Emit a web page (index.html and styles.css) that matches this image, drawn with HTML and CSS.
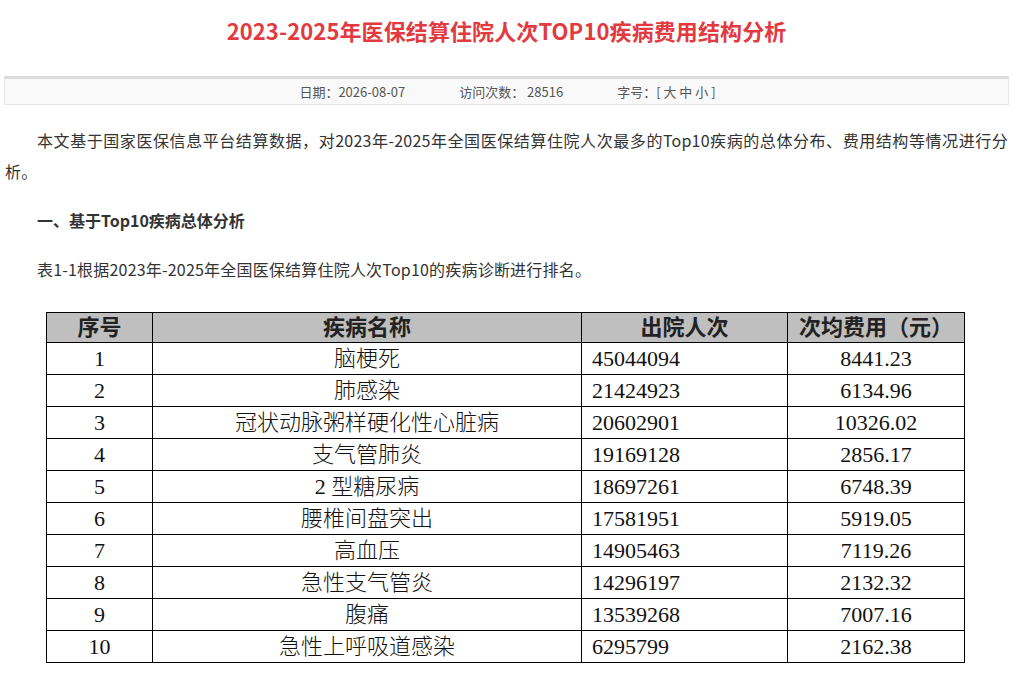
FILE: index.html
```html
<!DOCTYPE html>
<html lang="zh-CN">
<head>
<meta charset="utf-8">
<title>2023-2025年医保结算住院人次TOP10疾病费用结构分析</title>
<link rel="stylesheet" href="styles.css">
</head>
<body>
<div class="page">
  <h1 class="title">2023-2025年医保结算住院人次TOP10疾病费用结构分析</h1>
  <div class="infobar">
    <span class="info-item">日期：2026-08-07</span>
    <span class="info-item">访问次数： 28516</span>
    <span class="info-item">字号：[ 大 中 小 ]</span>
  </div>
  <div class="article">
    <p class="para">本文基于国家医保信息平台结算数据，对2023年-2025年全国医保结算住院人次最多的Top10疾病的总体分布、费用结构等情况进行分析。</p>
    <p class="para heading">一、基于Top10疾病总体分析</p>
    <p class="para">表1-1根据2023年-2025年全国医保结算住院人次Top10的疾病诊断进行排名。</p>
    <table class="data">
      <colgroup>
        <col class="c1"><col class="c2"><col class="c3"><col class="c4">
      </colgroup>
      <thead>
        <tr><th>序号</th><th>疾病名称</th><th>出院人次</th><th>次均费用（元）</th></tr>
      </thead>
      <tbody>
        <tr><td>1</td><td>脑梗死</td><td class="num">45044094</td><td>8441.23</td></tr>
        <tr><td>2</td><td>肺感染</td><td class="num">21424923</td><td>6134.96</td></tr>
        <tr><td>3</td><td>冠状动脉粥样硬化性心脏病</td><td class="num">20602901</td><td>10326.02</td></tr>
        <tr><td>4</td><td>支气管肺炎</td><td class="num">19169128</td><td>2856.17</td></tr>
        <tr><td>5</td><td>2 型糖尿病</td><td class="num">18697261</td><td>6748.39</td></tr>
        <tr><td>6</td><td>腰椎间盘突出</td><td class="num">17581951</td><td>5919.05</td></tr>
        <tr><td>7</td><td>高血压</td><td class="num">14905463</td><td>7119.26</td></tr>
        <tr><td>8</td><td>急性支气管炎</td><td class="num">14296197</td><td>2132.32</td></tr>
        <tr><td>9</td><td>腹痛</td><td class="num">13539268</td><td>7007.16</td></tr>
        <tr><td>10</td><td>急性上呼吸道感染</td><td class="num">6295799</td><td>2162.38</td></tr>
      </tbody>
    </table>
  </div>
</div>
</body>
</html>
```
FILE: styles.css
```css
html, body {
  margin: 0;
  padding: 0;
  background: #fff;
}
body {
  font-family: "Noto Sans CJK SC", "Noto Sans", sans-serif;
  color: #333;
}
.page {
  width: 1005px;
  margin: 0 0 0 4px;
}
.title {
  margin: 0;
  padding-top: 15px;
  line-height: 30px;
  font-size: 22px;
  font-weight: bold;
  color: #e23a3f;
  text-align: center;
  letter-spacing: 0.1px;
}
.infobar {
  margin-top: 31px;
  height: 25px;
  line-height: 25px;
  border: 1px solid #e6e6e6;
  border-top: 3px solid #dcdcdc;
  background: #f9f9f9;
  display: flex;
  justify-content: center;
  gap: 54px;
  font-size: 13px;
  color: #555;
  padding-left: 2px;
}
.article {
  padding: 0 1px;
}
.para {
  margin: 20px 0 0 0;
  font-size: 16px;
  line-height: 31px;
  text-indent: 2em;
  text-align: justify;
  letter-spacing: 0.2px;
  color: #333;
}
.para + .para {
  margin-top: 18px;
}
.heading {
  font-weight: bold;
  letter-spacing: 0;
}
.data {
  margin: 27px auto 0;
  border-collapse: collapse;
  table-layout: fixed;
  width: 918px;
  font-family: "Liberation Serif", "Noto Sans CJK SC", serif;
  font-size: 22px;
  color: #111;
  position: relative;
  left: -1px;
}
.c1 { width: 106px; }
.c2 { width: 429px; }
.c3 { width: 206px; }
.c4 { width: 177px; }
.data th, .data td {
  border: 1px solid #000;
  padding: 0;
  text-align: center;
  white-space: nowrap;
}
.data th {
  background: #bfbfbf;
  height: 29px;
  line-height: 29px;
  font-weight: bold;
  font-size: 22px;
  color: #222;
}
.data td {
  height: 31px;
  line-height: 31px;
  font-weight: 300;
}
.data td.num {
  text-align: left;
  padding-left: 10px;
}
```
